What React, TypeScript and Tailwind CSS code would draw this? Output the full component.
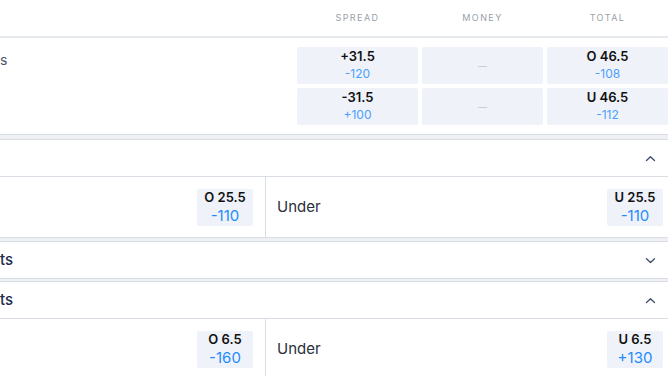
import React from "react";

const Chevron = ({ up }: { up: boolean }) => (
  <svg width="11" height="7" viewBox="0 0 11 7" fill="none" stroke="#3d4b6b" strokeWidth="1.3" strokeLinecap="round" strokeLinejoin="round">
    {up ? <polyline points="1.5,5.5 5.5,1.8 9.5,5.5" /> : <polyline points="1.5,1.8 5.5,5.5 9.5,1.8" />}
  </svg>
);

const Band = ({ h }: { h: string }) => (
  <div className={`${h} bg-[#eef0f4] border-y border-[#d9dde4]`} />
);

const OddBtn = ({ top, bottom }: { top: string; bottom: string }) => (
  <div className="flex h-[37px] w-[121px] flex-col items-center justify-center rounded-[2px] bg-[#eff2f9]">
    {top === "" ? (
      <span className="text-[9px] leading-none text-[#c3c8d0]">—</span>
    ) : (
      <>
        <span className="mt-[-2px] text-[13px] font-semibold leading-[16px] text-[#111]">{top}</span>
        <span className="mt-[2px] text-[12px] leading-[15px] text-[#4aa0ff]">{bottom}</span>
      </>
    )}
  </div>
);

const PropBtn = ({ top, bottom }: { top: string; bottom: string }) => (
  <div className="flex h-[37px] w-[56px] flex-col items-center justify-center rounded-[2px] bg-[#eff2f9]">
    <span className="text-[13px] font-semibold leading-[16px] text-[#111]">{top}</span>
    <span className="mt-[2px] text-[15px] leading-[18px] text-[#1f8bff]">{bottom}</span>
  </div>
);

const SectionHeader = ({ title, up, border }: { title: string; up: boolean; border: boolean }) => (
  <div className={`flex items-center justify-between pr-[12px] ${border ? "h-[37px] border-b border-[#d9dde4]" : "h-[36px]"}`}>
    <span className="text-[15px] font-medium text-[#1b2a4e]">{title}</span>
    <Chevron up={up} />
  </div>
);

const PropRow = ({ o, ov, u, uv }: { o: string; ov: string; u: string; uv: string }) => (
  <div className="flex h-[60px]">
    <div className="flex w-[266px] items-center justify-end border-r border-[#d9dde4] pr-[12px]">
      <PropBtn top={o} bottom={ov} />
    </div>
    <div className="flex flex-1 items-center justify-between pl-[11px] pr-[5px]">
      <span className="text-[15px] text-[#2a2f3a]">Under</span>
      <PropBtn top={u} bottom={uv} />
    </div>
  </div>
);

export default function App() {
  return (
    <div className="h-[376px] w-[668px] overflow-hidden bg-white" style={{ fontFamily: "Inter, 'Open Sans', sans-serif" }}>
      <div className="flex h-[38px] items-center border-b-2 border-[#e6e9ee] pl-[297px]">
        <div className="flex gap-[4px]">
          <div className="w-[121px] text-center text-[9px] tracking-[0.16em] text-[#9aa0a8]">SPREAD</div>
          <div className="w-[121px] text-center text-[9px] tracking-[0.16em] text-[#9aa0a8]">MONEY</div>
          <div className="w-[121px] text-center text-[9px] tracking-[0.16em] text-[#9aa0a8]">TOTAL</div>
        </div>
      </div>
      <div className="flex py-[9px]">
        <div className="flex-1">
          <span className="text-[14px] leading-[20px] text-[#4a5670]">s</span>
        </div>
        <div className="flex flex-col gap-[4px]">
          <div className="flex gap-[4px]">
            <OddBtn top="+31.5" bottom="-120" />
            <OddBtn top="" bottom="" />
            <OddBtn top="O 46.5" bottom="-108" />
          </div>
          <div className="flex gap-[4px]">
            <OddBtn top="-31.5" bottom="+100" />
            <OddBtn top="" bottom="" />
            <OddBtn top="U 46.5" bottom="-112" />
          </div>
        </div>
      </div>
      <Band h="h-[6px]" />
      <SectionHeader title="" up={true} border={true} />
      <PropRow o="O 25.5" ov="-110" u="U 25.5" uv="-110" />
      <Band h="h-[5px]" />
      <SectionHeader title="ts" up={false} border={false} />
      <Band h="h-[4px]" />
      <SectionHeader title="ts" up={true} border={true} />
      <PropRow o="O 6.5" ov="-160" u="U 6.5" uv="+130" />
    </div>
  );
}
